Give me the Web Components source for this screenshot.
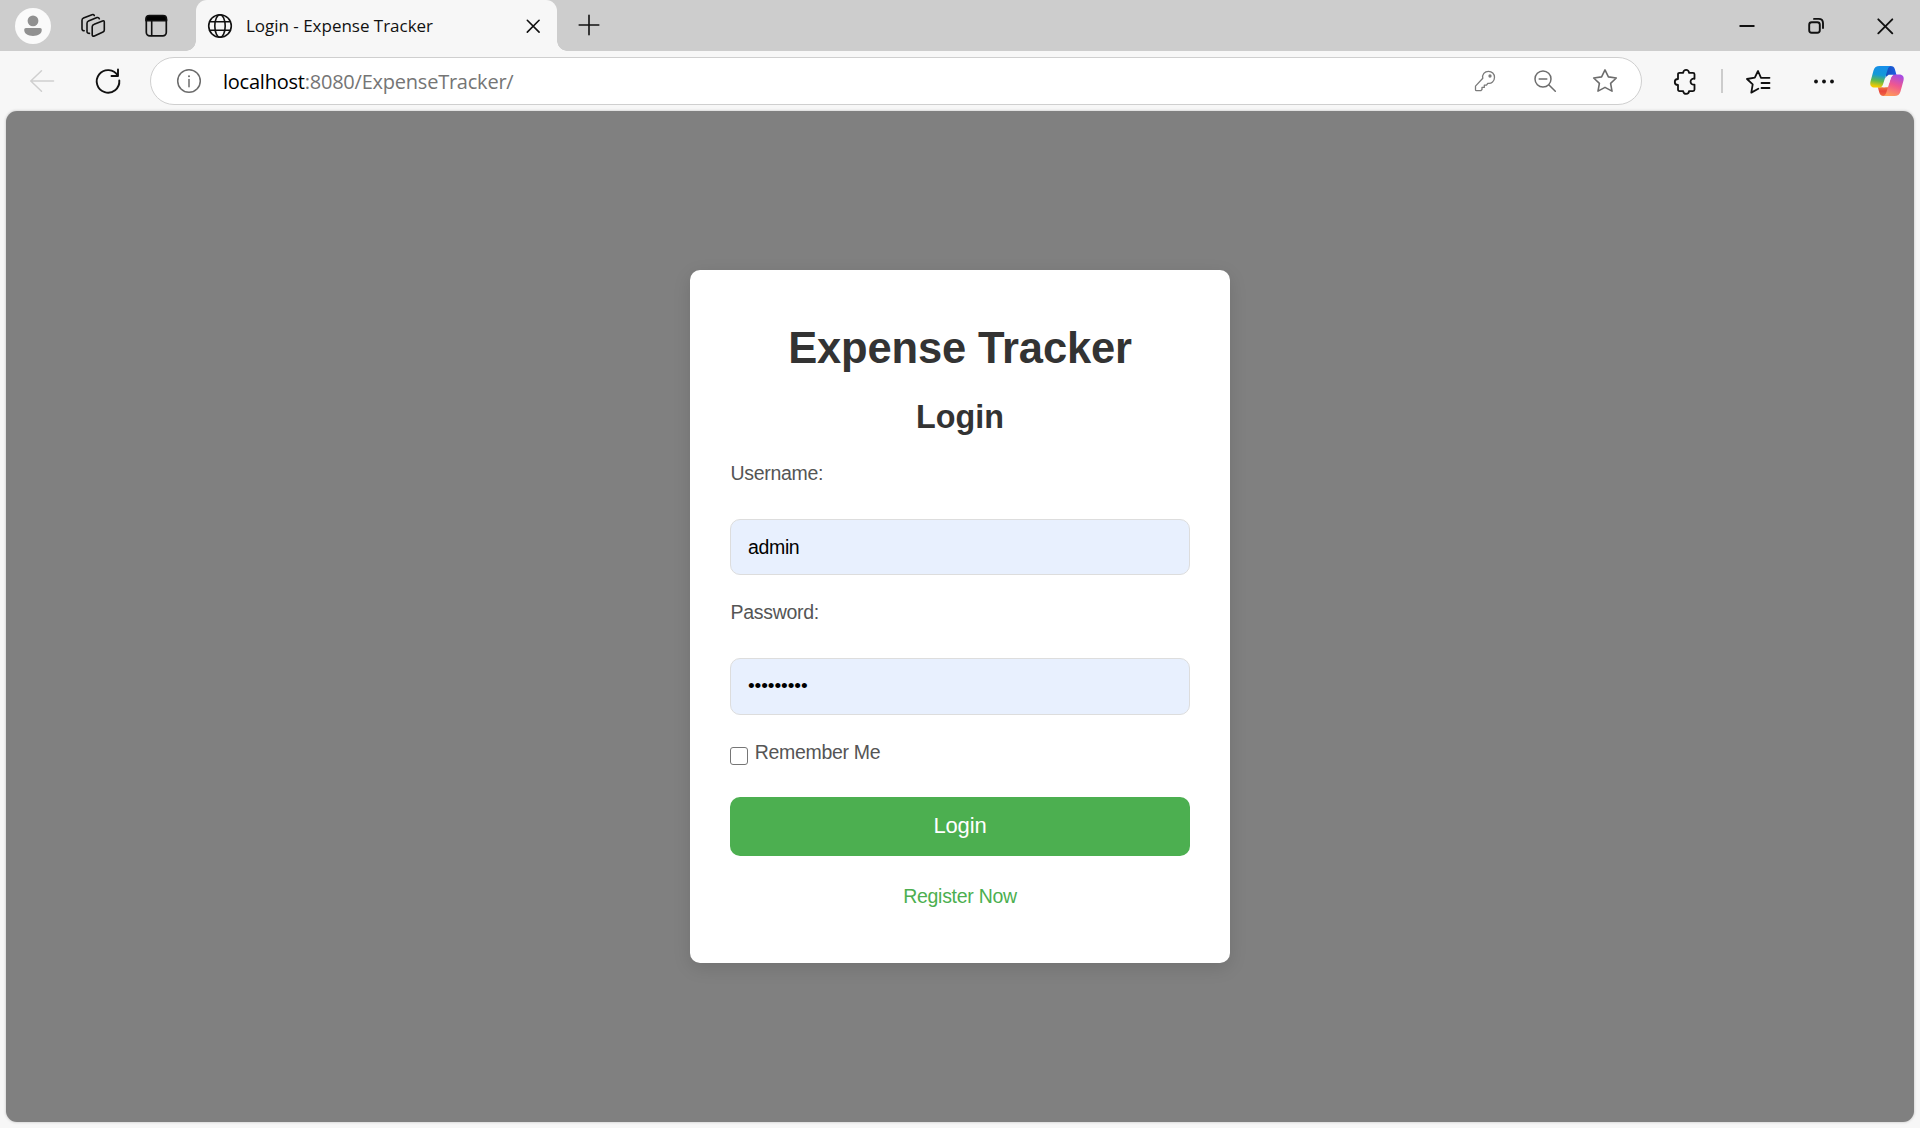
<!DOCTYPE html>
<html lang="en">
<head>
<meta charset="utf-8">
<title>Login - Expense Tracker</title>
<style>
html,body{margin:0;height:100%;overflow:hidden;background:#f7f7f7}
body{font-family:"Liberation Sans",Arial,sans-serif}
</style>
</head>
<body>
<browser-window>
  <tab-strip slot="tabs"><browser-tab>Login - Expense Tracker</browser-tab></tab-strip>
  <tool-bar slot="toolbar"><address-bar host="localhost" path=":8080/ExpenseTracker/"></address-bar></tool-bar>
  <login-card heading="Expense Tracker">
    <form-field label="Username:">admin</form-field>
    <form-field label="Password:">•••••••••</form-field>
    <check-option>Remember Me</check-option>
    <submit-button>Login</submit-button>
    <text-link>Register Now</text-link>
  </login-card>
</browser-window>
<script>
const define=(name,html,fill)=>customElements.define(name,class extends HTMLElement{
  constructor(){super();this.attachShadow({mode:'open'})}
  connectedCallback(){
    const t=document.createElement('template');
    t.innerHTML=html;
    this.shadowRoot.replaceChildren(t.content.cloneNode(true));
    if(fill)fill(this,this.shadowRoot);
  }
});

const icons={
  avatar:[36,'<circle cx="18" cy="18" r="18" fill="#fafafa" stroke="none"/><circle cx="18" cy="12.9" r="5.4" fill="#919191" stroke="none"/><path d="M11 20h14q1.8 0 1.8 1.8c0 4-3.7 6.2-8.8 6.2s-8.800-2.200-8.800-6.200Q9.200 20 11 20z" fill="#919191" stroke="none"/>'],
  workspaces:[28,'<path d="M15.200 12.200 L23.500 8.900 Q25.300 8.300 25.300 10.200 V18 Q25.300 19.500 24 20.100 L15.400 23.900 Q13.200 24.700 13.200 22.700 V14.700 Q13.200 12.900 15.200 12.200Z"/><path d="M10.500 21.400 Q8 21.500 8 19.500 V11.300 Q8 9.600 9.500 9 L18 5.600 Q19.700 5.100 20.300 6.700"/><path d="M5.200 18.700 Q3 18.700 3 16.700 V8.300 Q3 6.700 4.500 6.100 L13 2.700 Q14.700 2.200 15.300 3.500"/>'],
  panel:[28,'<rect x="4.300" y="3.800" width="20" height="20" rx="3.500" stroke-width="1.700"/><path d="M4 8.800V7q0-3.500 3.500-3.500h13.500Q24.500 3.500 24.500 7v1.800z" fill="#000"/><path d="M9.700 9v14.500"/>'],
  globe:[28,'<circle cx="14" cy="14" r="11.300"/><ellipse cx="14" cy="14" rx="5.200" ry="11.300"/><path d="M3.600 9.800h20.800M3.600 18.200h20.800"/>'],
  x:[28,'<path d="M8.300 8.300l11.800 11.800M20.100 8.300L8.300 20.100"/>'],
  bigx:[28,'<path d="M7.300 7.300l14 14M21.300 7.300L7.300 21.300" stroke-width="1.900"/>'],
  plus:[28,'<path d="M14 4.200v19.600M4.200 14h19.600"/>'],
  min:[28,'<path d="M6.500 14h15" stroke-width="2" stroke-linecap="butt"/>'],
  restore:[28,'<rect x="7.200" y="10.200" width="10.600" height="10.600" rx="2.500" stroke-width="1.900"/><path d="M12 6.900h4.700q4.300 0 4.300 4.300V16" stroke-width="1.900"/>'],
  back:[28,'<path d="M25.500 14H2.700M13.500 3.800L2.800 14l10.700 10.200" stroke="#cfcfcf" stroke-width="1.500"/>'],
  reload:[28,'<path d="M23.800 8.700A11.300 11.300 0 1 0 25.300 13.500M24 2.500V9h-6.500" stroke-width="1.900"/>'],
  info:[28,'<circle cx="14" cy="14" r="11.300" stroke="#6c6c6c" stroke-width="1.500"/><path d="M14 12.500v7.300" stroke="#6c6c6c" stroke-width="1.500"/><circle cx="14" cy="9.200" r="1" fill="#6c6c6c" stroke="none"/>'],
  key:[28,'<g stroke="#7b7b7b" stroke-width="1.300"><path d="M11.800 11.300c-.9-4 1.800-7 5.700-7 3.400 0 6 2.500 6 6 0 4-3 6.700-6.700 6l-1.300 1.900h-2.200v2.200H11v2.200l-1.200 1.100H5.500q-1 0-1-1v-3.600z"/><circle cx="19" cy="9" r="1" fill="#7b7b7b"/></g>'],
  zoomout:[28,'<g stroke="#6d6d6d" stroke-width="1.500"><circle cx="12" cy="12" r="8"/><path d="M18 18l6.300 6.300M8.200 12h7.600"/></g>'],
  star:[28,'<path d="M14 2.900l3.400 7 7.900 1.100-5.700 5.400 1.400 7.700-7-3.700-7 3.700 1.400-7.700L2.700 11l7.900-1.100z" stroke="#6d6d6d"/>'],
  puzzle:[28,'<path d="M7.500 4.800h3.700c0-3.800 5.800-3.800 5.800 0h4q1.500 0 1.500 1.500v4.500c-5-1-5.500 6.400 0 5.800v5q0 1.500-1.500 1.500h-4c0 3.800-5.800 3.800-5.800 0H7.500Q6 23.100 6 21.600V17c-4.300 0-4.300-6 0-6V6.300q0-1.500 1.500-1.500z" stroke-width="1.800"/>'],
  favorites:[28,'<path d="M17 9.800L14 3 10.800 9.600 3 11l5.700 5.300L7.300 24.600l7-3.800M17 9.800h8.500M17.500 15h8M17.500 20h8" stroke-width="1.800"/>'],
  dots:[28,'<g fill="#111" stroke="none"><circle cx="6" cy="14.500" r="1.900"/><circle cx="14" cy="14.500" r="1.900"/><circle cx="22" cy="14.500" r="1.900"/></g>'],
  copilot:[36,'<defs><linearGradient id="a" x1=".4" y1="0" x2=".25" y2="1"><stop stop-color="#168fe9"/><stop offset=".4" stop-color="#1499d6"/><stop offset=".68" stop-color="#62b94b"/><stop offset=".94" stop-color="#f2ca00"/></linearGradient><linearGradient id="b" x1=".7" y1="0" x2=".35" y2="1"><stop stop-color="#a54ce4"/><stop offset=".48" stop-color="#ef5790"/><stop offset="1" stop-color="#ff9a59"/></linearGradient><linearGradient id="c" x1="0" x2="1"><stop stop-color="#174eb9"/><stop offset="1" stop-color="#1d5fe4"/></linearGradient><linearGradient id="d" y1="0" x2="0" y2="1"><stop stop-color="#f7a83e"/><stop offset=".6" stop-color="#e8463c"/><stop offset="1" stop-color="#f26a45"/></linearGradient></defs><g stroke="none"><path d="M17 3h4.500c2.600 0 3.700 1 4.400 3.300L27.500 12H22c-3 0-4.500.5-5.500 3.500z" fill="url(#c)"/><path d="M18.500 33h-4c-2.500 0-3.500-1.200-4.200-3.500L8.800 24.200H14c3 0 4.500-.5 5.500-3.500z" fill="url(#d)"/><path d="M10.500 3H22.500c-2 0-3.100 1.300-3.800 3.500l-4.500 14.200c-.8 2.700-2 3.900-4.700 3.900H6C2 24.600.6 22.100 1.500 18.500L4.500 7.500C5.400 4.300 7.300 3 10.500 3z" fill="url(#a)"/><path d="M25.500 33H13.500c2 0 3.100-1.300 3.800-3.500l4.500-14.200c.8-2.700 2-3.900 4.700-3.900H30c4 0 5.400 2.500 4.500 6.100l-3 11c-.9 3.200-2.800 4.500-6 4.500z" fill="url(#b)"/><path d="M19.500 11.700h5.200c-1.600.7-2.400 1.900-3 3.600l-2.900 9h-5.300c1.600-.7 2.300-1.900 2.800-3.600z" fill="#f7f7f7"/></g>']
};
define('ui-icon','<style>:host{display:block;flex:none}svg{display:block}</style>',(el,root)=>{
  const [s,body]=icons[el.getAttribute('name')];
  const t=document.createElement('template');
  t.innerHTML=`<svg width="${s}" height="${s}" viewBox="0 0 ${s} ${s}" fill="none" stroke="#111" stroke-width="1.600" stroke-linecap="round" stroke-linejoin="round">${body}</svg>`;
  root.append(t.content);
});

define('browser-window',`<style>
:host{display:flex;flex-direction:column;height:1128px;width:1920px;background:#f7f7f7}
main{flex:1;margin:0 6px 6px;border-radius:11px;background:#808080;box-shadow:0 0 3px #bbb;display:flex;justify-content:center;align-items:flex-start;padding-top:159px;box-sizing:border-box}
</style><slot name="tabs"></slot><slot name="toolbar"></slot><main><slot></slot></main>`);

define('tab-strip',`<style>
:host{display:flex;align-items:center;height:51px;background:#cdcdcd;flex:none}
.a{margin-left:15px}.b{margin-left:28px}.c{margin-left:35px}
slot{display:block;margin-left:26px}
.p{margin-left:18px;margin-top:-2px}.m{margin-left:auto}.r{margin-left:41px}.w{margin:0 21px 0 41px}
</style><ui-icon class="a" name="avatar"></ui-icon><ui-icon class="b" name="workspaces"></ui-icon><ui-icon class="c" name="panel"></ui-icon><slot></slot><ui-icon class="p" name="plus"></ui-icon><ui-icon class="m" name="min"></ui-icon><ui-icon class="r" name="restore"></ui-icon><ui-icon class="w" name="bigx"></ui-icon>`);

define('browser-tab',`<style>
:host{display:flex;align-items:center;width:361px;height:51px;box-sizing:border-box;padding:0 10px;background:#f7f7f7;border-radius:11px 11px 0 0;position:relative;font:17px "Open Sans","Noto Sans",sans-serif;letter-spacing:-.02px;color:#111}
:host::before,:host::after{content:"";position:absolute;bottom:0;width:10px;height:10px}
:host::before{left:-10px;background:radial-gradient(circle at 0 0,transparent 9.500px,#f7f7f7 10px)}
:host::after{right:-10px;background:radial-gradient(circle at 100% 0,transparent 9.500px,#f7f7f7 10px)}
span{flex:1;margin-left:12px;white-space:nowrap}
</style><ui-icon name="globe"></ui-icon><span><slot></slot></span><ui-icon name="x"></ui-icon>`);

define('tool-bar',`<style>
:host{display:flex;align-items:center;height:60px;flex:none}
.a{margin-left:28px}.b{margin-left:38px}
slot{display:block;margin-left:28px}
.p{margin-left:30px;margin-top:1px}.d{width:2px;height:24px;background:#ccc;margin-left:21px}.f{margin-left:21px;margin-top:1px}.m{margin-left:38px}.c{margin-left:31px}
</style><ui-icon class="a" name="back"></ui-icon><ui-icon class="b" name="reload"></ui-icon><slot></slot><ui-icon class="p" name="puzzle"></ui-icon><div class="d"></div><ui-icon class="f" name="favorites"></ui-icon><ui-icon class="m" name="dots"></ui-icon><ui-icon class="c" name="copilot"></ui-icon>`);

define('address-bar',`<style>
:host{display:flex;align-items:center;width:1492px;height:48px;box-sizing:border-box;border:1.500px solid #cfcfcf;border-radius:24px;background:#fff;padding:0 22px 0 24px;font:20px "Open Sans","Noto Sans",sans-serif;letter-spacing:-.23px;color:#757575}
p{flex:1;margin:0 0 0 20px;white-space:nowrap}b{font-weight:400;color:#000}
.k+*{margin-left:32px}.s{margin-left:32px}
</style><ui-icon name="info"></ui-icon><p><b></b><span></span></p><ui-icon class="k" name="key"></ui-icon><ui-icon name="zoomout"></ui-icon><ui-icon class="s" name="star"></ui-icon>`,(el,r)=>{
  r.querySelector('b').textContent=el.getAttribute('host');
  r.querySelector('span').textContent=el.getAttribute('path');
});

define('login-card',`<style>
:host{display:block;box-sizing:border-box;width:540px;height:693px;padding:53px 40px 0;background:#fff;border-radius:10px;box-shadow:0 5px 18px rgba(0,0,0,.12);color:#333;text-align:center}
h1{margin:0;font-size:43.500px;line-height:50px;letter-spacing:-.14px}h2{margin:26px 0;font-size:32.300px;line-height:36px}
</style><h1></h1><h2>Login</h2><slot></slot>`,(el,r)=>{r.querySelector('h1').textContent=el.getAttribute('heading')});

define('form-field',`<style>
:host{display:block;text-align:left;margin-bottom:25px}
label{display:block;font-size:19.500px;letter-spacing:-.3px;line-height:24px;color:#555;margin-bottom:34px;padding-left:.5px}
div{display:flex;align-items:center;height:56px;box-sizing:border-box;border:1px solid #ddd;border-radius:10px;background:#e8f0fe;padding:0 17px;font-size:19.500px;letter-spacing:-.35px;color:#000}
:host(:not(:first-child)) div{height:57px;padding-bottom:2px;font-size:19.200px;letter-spacing:-.1px}
</style><label></label><div role="textbox"><slot></slot></div>`,(el,r)=>{r.querySelector('label').textContent=el.getAttribute('label')});

define('check-option',`<style>
:host{display:flex;font-size:19.500px;letter-spacing:-.3px;line-height:24px;color:#555;height:24px}
i{width:17.500px;height:17.500px;box-sizing:border-box;border:1.300px solid #767676;border-radius:3px;margin:7px 7.200px 0 0}
</style><i></i><slot></slot>`);

define('submit-button',`<style>
:host{display:flex;align-items:center;justify-content:center;margin-top:33px;height:59px;padding-bottom:2px;box-sizing:border-box;border-radius:10px;background:#4caf50;color:#fff;font-size:22px;letter-spacing:-.15px}
</style><slot></slot>`);

define('text-link',`<style>:host{display:block;margin-top:28px;font-size:19.500px;letter-spacing:-.28px;line-height:24px;color:#4caf50}</style><slot></slot>`);
</script>
</body>
</html>
